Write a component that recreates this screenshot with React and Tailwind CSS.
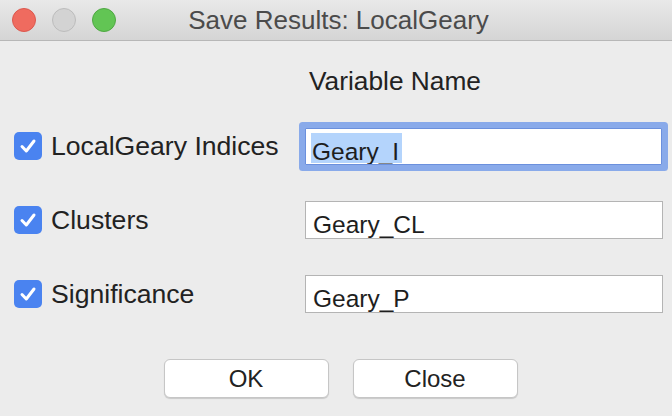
import React from 'react';

const rows = [
  { label: 'LocalGeary Indices', value: 'Geary_I', focused: true },
  { label: 'Clusters', value: 'Geary_CL' },
  { label: 'Significance', value: 'Geary_P' },
];

function CheckBox() {
  return (
    <div className="flex h-[28px] w-[28px] shrink-0 items-center justify-center rounded-[5px] bg-[#4a83f0]">
      <svg width="28" height="28" viewBox="0 0 28 28">
        <polyline
          points="8,14.5 12.3,19 20,9"
          fill="none"
          stroke="white"
          strokeWidth="3"
          strokeLinecap="round"
          strokeLinejoin="round"
        />
      </svg>
    </div>
  );
}

function Field({ value, focused }) {
  if (focused) {
    return (
      <div className="h-[37px] w-[357px] overflow-hidden rounded-[1px] border border-[#6b90dd] bg-white shadow-[0_0_0_6px_#89aaea]">
        <div className="ml-[5px] mt-[4px] h-[30px] w-[91px] bg-[#b4d4fc] pl-[1px] pt-[7px] text-[24.5px] leading-[24px] text-[#1e1e1e]">
          {value}
        </div>
      </div>
    );
  }
  return (
    <div className="h-[38px] w-[358px] overflow-hidden border border-[#b4b4b4] bg-white pl-[7px] pt-[11px] text-[24.5px] leading-[24px] text-[#1e1e1e]">
      {value}
    </div>
  );
}

export default function App() {
  return (
    <div className="h-[416px] w-[672px] overflow-hidden bg-[#ececec] font-['Liberation_Sans',Arial,sans-serif] text-[#222]">
      <div className="relative flex h-[41px] items-center justify-center border-b border-[#b7b7b7] bg-gradient-to-b from-[#e9e9e9] to-[#d5d5d5]">
        <div className="absolute left-[12px] top-[8px] flex gap-[16px]">
          <div className="h-[24px] w-[24px] rounded-full border border-[#dc584e] bg-[#ef6b5f]"></div>
          <div className="h-[24px] w-[24px] rounded-full border border-[#bcbcbc] bg-[#d3d3d3]"></div>
          <div className="h-[24px] w-[24px] rounded-full border border-[#4fa843] bg-[#62c554]"></div>
        </div>
        <span className="pl-[5px] text-[26px] leading-[30px] text-[#4b4b4b]">Save Results: LocalGeary</span>
      </div>

      <div className="pt-[25px]">
        <div className="pl-[309px] text-[26.3px] leading-[30px]">Variable Name</div>

        <div className="mt-[31px] flex flex-col gap-[36px] pl-[14px]">
          {rows.map((r) => (
            <div key={r.label} className="flex h-[38px] items-center">
              <div className="flex w-[291px] items-center gap-[9px]">
                <CheckBox />
                <span className="text-[26.6px] leading-[30px]">{r.label}</span>
              </div>
              <Field value={r.value} focused={r.focused} />
            </div>
          ))}
        </div>

        <div className="mt-[46px] flex justify-center gap-[24px] pl-[9px]">
          <button className="h-[39px] w-[165px] rounded-[6px] border border-[#c6c6c6] bg-white text-[24px] text-[#222] shadow-[0_1px_1px_rgba(0,0,0,0.15)]">
            OK
          </button>
          <button className="h-[39px] w-[165px] rounded-[6px] border border-[#c6c6c6] bg-white text-[24px] text-[#222] shadow-[0_1px_1px_rgba(0,0,0,0.15)]">
            Close
          </button>
        </div>
      </div>
    </div>
  );
}
